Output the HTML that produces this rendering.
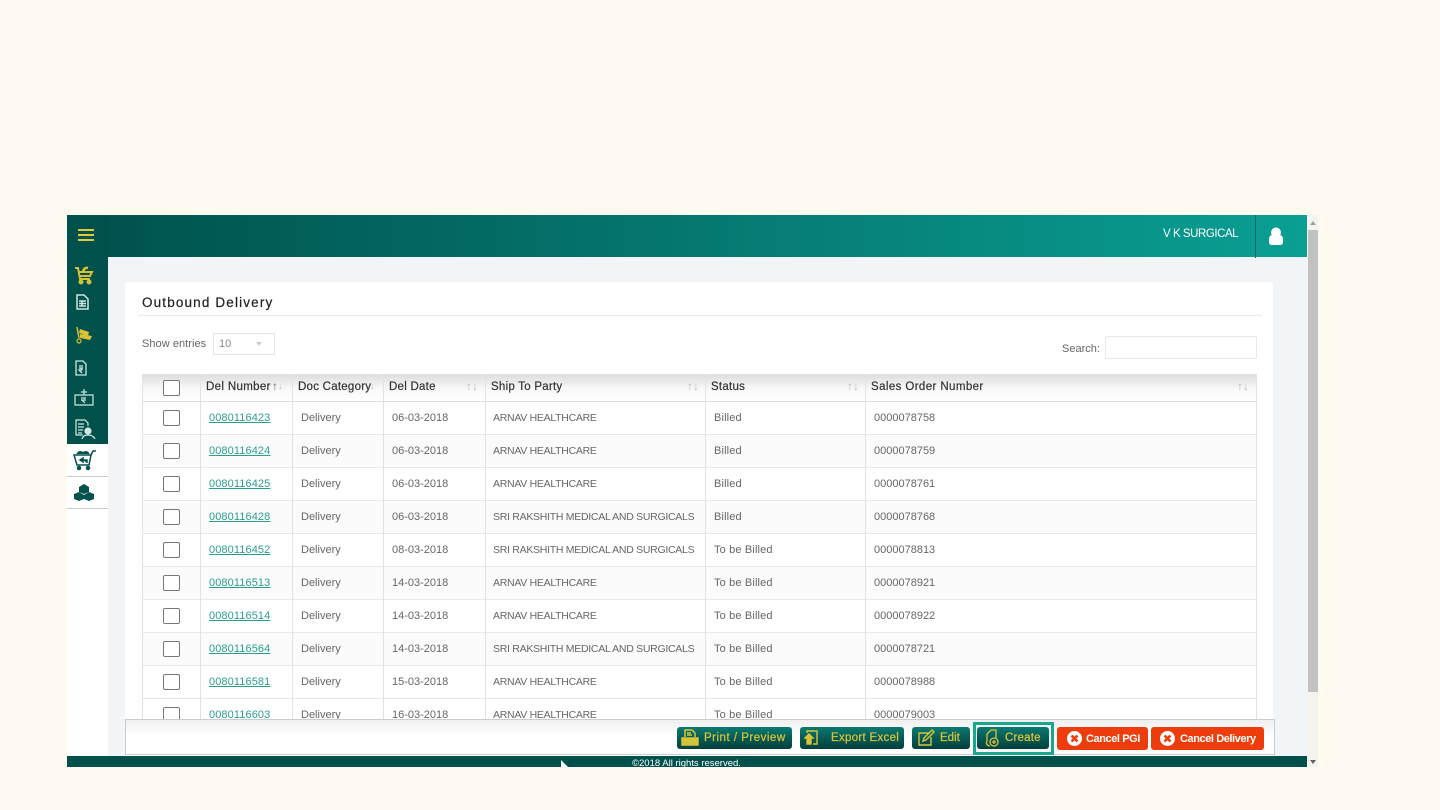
<!DOCTYPE html>
<html><head><meta charset="utf-8"><title>Outbound Delivery</title>
<style>
html,body{margin:0;padding:0;width:1440px;height:810px;overflow:hidden;background:#fffaf0;font-family:"Liberation Sans",sans-serif}
div,a,span,svg{position:absolute;display:block;box-sizing:border-box;white-space:nowrap}
.t{font-size:11px;color:#666;line-height:14px}
.u{font-size:10.5px;letter-spacing:-.28px}
.s{letter-spacing:.15px}
.h{font-size:11.5px;color:#333;line-height:14px;top:380px;-webkit-text-stroke:.2px #333;letter-spacing:.25px}
.v{position:absolute;width:1px;background:#dfe3e6;top:374px;height:345px}
.cb{width:17px;height:16px;left:163px;border:1px solid #777;border-radius:2px;background:#fff}
.l{left:209px;color:#2a9d92;text-decoration:underline;letter-spacing:.1px}
.btn{top:727px;height:22px;border-radius:3px;background:linear-gradient(#0b7a70,#075a54 50%,#04403c);color:#d6c33c;font-size:11.5px;line-height:22px;-webkit-text-stroke:.25px #d6c33c}
.red{top:727px;height:23px;border-radius:3px;background:#ee3d0c;color:#fff;font-size:11px;line-height:24px;font-weight:bold;letter-spacing:-.42px}
.arr{font-size:12px;color:#bbb;top:380px;line-height:13px}
</style></head><body>
<div style="left:67px;top:215px;width:1240px;height:552px;background:#f1f5f8"></div>
<div style="left:67px;top:215px;width:1240px;height:42px;background:linear-gradient(90deg,#00504c,#0a9f93)"></div>
<div style="left:67px;top:215px;width:41px;height:541px;background:#fff"></div>
<div style="left:67px;top:215px;width:41px;height:229px;background:#00504c"></div>
<div style="left:78px;top:229px;width:16px;height:2px;background:#e0c93f"></div>
<div style="left:78px;top:234px;width:16px;height:2px;background:#e0c93f"></div>
<div style="left:78px;top:239px;width:16px;height:2px;background:#e0c93f"></div>
<div style="left:1163px;top:227px;font-size:11.5px;line-height:14px;color:#fff;letter-spacing:-.45px">V K SURGICAL</div>
<div style="left:1255px;top:215px;width:1px;height:43px;background:#066"></div>
<svg style="left:1268px;top:227px" width="16" height="18" viewBox="0 0 16 18"><circle cx="8" cy="5.500" r="5" fill="#fff"/><path d="M1 15V12Q1 8 5 8H11Q15 8 15 12V15Q15 18 12 18H4Q1 18 1 15Z" fill="#fff"/></svg>

<!-- sidebar icons -->
<svg style="left:74px;top:266px" width="20" height="19" viewBox="0 0 20 19" fill="none" stroke="#d8c234" stroke-width="2"><path d="M1 2H4L6 13H16"/><path d="M5 6H18L16 10H6"/><path d="M9 6Q10 1 14 2" stroke-width="2.500"/><circle cx="7" cy="16" r="1.500" fill="#d8c234"/><circle cx="15" cy="16" r="1.500" fill="#d8c234"/></svg>
<svg style="left:76px;top:294px" width="13" height="16" viewBox="0 0 13 16" fill="none" stroke="#cfe6e2" stroke-width="1.500"><path d="M1 1H8L12 5V15H1Z"/><path d="M3 7H10M3 9.500H10M3 12H10M6 7V12"/></svg>
<svg style="left:75px;top:326px" width="18" height="18" viewBox="0 0 18 18" fill="#d8c234"><path d="M2 1L4 12" stroke="#d8c234" stroke-width="1.500"/><path d="M5 3L14 6 13 10 4 7ZM5 8L17 10 15 14 5 12Z"/><circle cx="4" cy="15" r="2" fill="none" stroke="#d8c234" stroke-width="1.200"/></svg>
<svg style="left:75px;top:360px" width="12" height="16" viewBox="0 0 12 16" fill="none" stroke="#cfe6e2" stroke-width="1.300"><path d="M1 1H8L11 4V15H1Z"/><path d="M4 6H8M4 8H8M4 8Q7 8 7 10L4 10L7 13"/></svg>
<svg style="left:73px;top:388px" width="22" height="18" viewBox="0 0 22 18" fill="none" stroke="#cfe6e2" stroke-width="1.200"><path d="M2 7H20V17H2Z"/><path d="M11 1V7M8 4H14" /><path d="M8 10H13M8 12H13M9 12L12 15"/></svg>
<svg style="left:74px;top:419px" width="22" height="21" viewBox="0 0 22 21" fill="none" stroke="#cfe6e2" stroke-width="1.200"><path d="M9 16H2V1H11L14 4V7"/><path d="M4 5H10M4 8H10M4 11H9M4 14H8"/><circle cx="14" cy="12" r="3" fill="#cfe6e2"/><path d="M8 20Q9 16 14 16T21 20"/></svg>
<div style="left:67px;top:476px;width:41px;height:1px;background:#ccc"></div>
<div style="left:67px;top:508px;width:41px;height:1px;background:#ccc"></div>
<svg style="left:73px;top:449px" width="24" height="22" viewBox="0 0 24 22" fill="none" stroke="#06524d" stroke-width="1.500"><path d="M1 6H18L16 16H4Z"/><path d="M18 6L20 2H23"/><path d="M4 5Q7 1 10 4Q13 1 16 5" fill="#06524d"/><path d="M7 11L10 9V13ZM10 11H14V14" fill="#06524d"/><circle cx="6" cy="19" r="1.500" fill="#06524d"/><circle cx="15" cy="19" r="1.500" fill="#06524d"/></svg>
<svg style="left:74px;top:484px" width="20" height="17" viewBox="0 0 20 17" fill="#06524d"><path d="M10 0L15 3V8L10 10 5 8V3Z"/><path d="M5 8L10 11V15L5 17 0 15V10Z"/><path d="M15 8L20 10V15L15 17 10 15V11Z"/></svg>

<!-- card -->
<div style="left:125px;top:282px;width:1148px;height:475px;background:#fff;border-radius:3px"></div>
<div style="left:142px;top:295px;font-size:13.500px;line-height:16px;color:#222;letter-spacing:1.15px;-webkit-text-stroke:.2px #222">Outbound Delivery</div>
<div style="left:138px;top:315px;width:1124px;height:1px;background:#e6e9ec"></div>
<div class="t" style="left:142px;top:337px;letter-spacing:.05px">Show entries</div>
<div style="left:213px;top:333px;width:62px;height:22px;border:1px solid #e6e8ea;border-radius:2px"></div>
<div class="t" style="left:219px;top:337px;color:#888">10</div>
<div style="left:256px;top:342px;width:0;height:0;border:3px solid transparent;border-top:4px solid #ccc"></div>
<div class="t" style="left:1062px;top:342px">Search:</div>
<div style="left:1105px;top:336px;width:152px;height:23px;border:1px solid #e6e8ea;border-radius:2px"></div>

<!-- table -->
<div style="left:142px;top:374px;width:1115px;height:28px;background:linear-gradient(#dedcdd,#f8f8f8 55%,#fff);border-bottom:1px solid #dcdfe2"></div>
<div style="left:142px;top:434px;width:1115px;height:33px;background:#fbfbfb"></div>
<div style="left:142px;top:500px;width:1115px;height:33px;background:#fbfbfb"></div>
<div style="left:142px;top:566px;width:1115px;height:33px;background:#fbfbfb"></div>
<div style="left:142px;top:632px;width:1115px;height:33px;background:#fbfbfb"></div>
<div style="left:142px;top:434px;width:1115px;height:1px;background:#e6e9ec"></div>
<div style="left:142px;top:467px;width:1115px;height:1px;background:#e6e9ec"></div>
<div style="left:142px;top:500px;width:1115px;height:1px;background:#e6e9ec"></div>
<div style="left:142px;top:533px;width:1115px;height:1px;background:#e6e9ec"></div>
<div style="left:142px;top:566px;width:1115px;height:1px;background:#e6e9ec"></div>
<div style="left:142px;top:599px;width:1115px;height:1px;background:#e6e9ec"></div>
<div style="left:142px;top:632px;width:1115px;height:1px;background:#e6e9ec"></div>
<div style="left:142px;top:665px;width:1115px;height:1px;background:#e6e9ec"></div>
<div style="left:142px;top:698px;width:1115px;height:1px;background:#e6e9ec"></div>
<span class="v" style="left:142px"></span><span class="v" style="left:200px"></span><span class="v" style="left:292px"></span><span class="v" style="left:383px"></span><span class="v" style="left:485px"></span><span class="v" style="left:705px"></span><span class="v" style="left:865px"></span><span class="v" style="left:1256px"></span>

<div class="cb" style="top:380px"></div>
<div class="h" style="left:206px;letter-spacing:.35px">Del Number</div><div class="arr" style="left:272px;color:#666">↑</div><div class="arr" style="left:278px;font-size:9px">↓</div>
<div class="h" style="left:298px">Doc Category</div><div class="arr" style="left:370px;font-size:9px">↓</div>
<div class="h" style="left:389px">Del Date</div><div class="arr" style="left:466px">↑↓</div>
<div class="h" style="left:491px">Ship To Party</div><div class="arr" style="left:687px">↑↓</div>
<div class="h" style="left:711px">Status</div><div class="arr" style="left:847px">↑↓</div>
<div class="h" style="left:871px;letter-spacing:.4px">Sales Order Number</div><div class="arr" style="left:1237px">↑↓</div>

<div class="cb" style="top:410px"></div><a class="t l" style="top:411px">0080116423</a><div class="t" style="left:301px;top:411px">Delivery</div><div class="t" style="left:392px;top:411px">06-03-2018</div><div class="t u" style="left:493px;top:411px">ARNAV HEALTHCARE</div><div class="t s" style="left:714px;top:411px">Billed</div><div class="t" style="left:874px;top:411px">0000078758</div>
<div class="cb" style="top:443px"></div><a class="t l" style="top:444px">0080116424</a><div class="t" style="left:301px;top:444px">Delivery</div><div class="t" style="left:392px;top:444px">06-03-2018</div><div class="t u" style="left:493px;top:444px">ARNAV HEALTHCARE</div><div class="t s" style="left:714px;top:444px">Billed</div><div class="t" style="left:874px;top:444px">0000078759</div>
<div class="cb" style="top:476px"></div><a class="t l" style="top:477px">0080116425</a><div class="t" style="left:301px;top:477px">Delivery</div><div class="t" style="left:392px;top:477px">06-03-2018</div><div class="t u" style="left:493px;top:477px">ARNAV HEALTHCARE</div><div class="t s" style="left:714px;top:477px">Billed</div><div class="t" style="left:874px;top:477px">0000078761</div>
<div class="cb" style="top:509px"></div><a class="t l" style="top:510px">0080116428</a><div class="t" style="left:301px;top:510px">Delivery</div><div class="t" style="left:392px;top:510px">06-03-2018</div><div class="t u" style="left:493px;top:510px">SRI RAKSHITH MEDICAL AND SURGICALS</div><div class="t s" style="left:714px;top:510px">Billed</div><div class="t" style="left:874px;top:510px">0000078768</div>
<div class="cb" style="top:542px"></div><a class="t l" style="top:543px">0080116452</a><div class="t" style="left:301px;top:543px">Delivery</div><div class="t" style="left:392px;top:543px">08-03-2018</div><div class="t u" style="left:493px;top:543px">SRI RAKSHITH MEDICAL AND SURGICALS</div><div class="t s" style="left:714px;top:543px">To be Billed</div><div class="t" style="left:874px;top:543px">0000078813</div>
<div class="cb" style="top:575px"></div><a class="t l" style="top:576px">0080116513</a><div class="t" style="left:301px;top:576px">Delivery</div><div class="t" style="left:392px;top:576px">14-03-2018</div><div class="t u" style="left:493px;top:576px">ARNAV HEALTHCARE</div><div class="t s" style="left:714px;top:576px">To be Billed</div><div class="t" style="left:874px;top:576px">0000078921</div>
<div class="cb" style="top:608px"></div><a class="t l" style="top:609px">0080116514</a><div class="t" style="left:301px;top:609px">Delivery</div><div class="t" style="left:392px;top:609px">14-03-2018</div><div class="t u" style="left:493px;top:609px">ARNAV HEALTHCARE</div><div class="t s" style="left:714px;top:609px">To be Billed</div><div class="t" style="left:874px;top:609px">0000078922</div>
<div class="cb" style="top:641px"></div><a class="t l" style="top:642px">0080116564</a><div class="t" style="left:301px;top:642px">Delivery</div><div class="t" style="left:392px;top:642px">14-03-2018</div><div class="t u" style="left:493px;top:642px">SRI RAKSHITH MEDICAL AND SURGICALS</div><div class="t s" style="left:714px;top:642px">To be Billed</div><div class="t" style="left:874px;top:642px">0000078721</div>
<div class="cb" style="top:674px"></div><a class="t l" style="top:675px">0080116581</a><div class="t" style="left:301px;top:675px">Delivery</div><div class="t" style="left:392px;top:675px">15-03-2018</div><div class="t u" style="left:493px;top:675px">ARNAV HEALTHCARE</div><div class="t s" style="left:714px;top:675px">To be Billed</div><div class="t" style="left:874px;top:675px">0000078988</div>
<div class="cb" style="top:707px"></div><a class="t l" style="top:708px">0080116603</a><div class="t" style="left:301px;top:708px">Delivery</div><div class="t" style="left:392px;top:708px">16-03-2018</div><div class="t u" style="left:493px;top:708px">ARNAV HEALTHCARE</div><div class="t s" style="left:714px;top:708px">To be Billed</div><div class="t" style="left:874px;top:708px">0000079003</div>

<!-- bottom bar -->
<div style="left:125px;top:719px;width:1150px;height:36px;background:linear-gradient(#f0f0f0,#fff 50%);border:1px solid #c8cdd0"></div>
<div class="btn" style="left:677px;width:115px"><span style="left:27px;top:0;letter-spacing:.5px">Print / Preview</span></div>
<svg style="left:681px;top:729px" width="18" height="18" viewBox="0 0 18 18" fill="none" stroke="#d6c33c" stroke-width="1.500"><path d="M4 8V1H11L14 4V8"/><path d="M1 9H17V16H1Z" fill="#d6c33c"/><path d="M6 4H10M6 6H11"/></svg>
<div class="btn" style="left:800px;width:104px"><span style="left:31px;top:0;letter-spacing:.3px">Export Excel</span></div>
<svg style="left:804px;top:730px" width="16" height="16" viewBox="0 0 16 16" fill="none" stroke="#d6c33c" stroke-width="1.400"><path d="M3 3V1H13V14H9"/><path d="M1 8L5 4 9 8H7V14H3V8Z" fill="#d6c33c"/></svg>
<div class="btn" style="left:912px;width:58px"><span style="left:28px;top:0">Edit</span></div>
<svg style="left:918px;top:729px" width="18" height="17" viewBox="0 0 18 17" fill="none" stroke="#d6c33c" stroke-width="1.400"><path d="M12 4H1V16H13V8"/><path d="M5 12L6 9 14 1 16 3 8 11Z"/></svg>
<div style="left:973px;top:722px;width:81px;height:33px;border:3px solid #18a78f;background:#f5f5f5"></div>
<div class="btn" style="left:977px;width:72px"><span style="left:28px;top:0;letter-spacing:.2px">Create</span></div>
<svg style="left:984px;top:729px" width="16" height="18" viewBox="0 0 16 18" fill="none" stroke="#d6c33c" stroke-width="1.300"><path d="M3 12V5L7 1H12V9"/><path d="M3 12Q1 16 6 17"/><circle cx="10" cy="13" r="4"/><path d="M8 13H12M10 11V15"/></svg>
<div class="red" style="left:1057px;width:91px"><span style="left:29px;top:0">Cancel PGI</span></div>
<svg style="left:1067px;top:731px" width="15" height="15" viewBox="0 0 15 15"><circle cx="7.500" cy="7.500" r="7.500" fill="#fff"/><path d="M4.500 4.500L10.500 10.500M10.500 4.500L4.500 10.500" stroke="#ee3d0c" stroke-width="2.600"/></svg>
<div class="red" style="left:1151px;width:113px"><span style="left:29px;top:0">Cancel Delivery</span></div>
<svg style="left:1160px;top:731px" width="15" height="15" viewBox="0 0 15 15"><circle cx="7.500" cy="7.500" r="7.500" fill="#fff"/><path d="M4.500 4.500L10.500 10.500M10.500 4.500L4.500 10.500" stroke="#ee3d0c" stroke-width="2.600"/></svg>

<!-- footer -->
<div style="left:67px;top:756px;width:1240px;height:11px;background:#00504c;overflow:hidden"><span style="left:565px;top:1px;font-size:9.500px;line-height:13px;color:#fff">©2018 All rights reserved.</span></div>
<svg style="left:561px;top:760px" width="8" height="7" viewBox="0 0 8 7"><path d="M0 0L7 7H0Z" fill="#fff"/></svg>

<!-- scrollbar -->
<div style="left:1307px;top:215px;width:11px;height:552px;background:#f5f3ee"></div>
<div style="left:1308px;top:230px;width:10px;height:462px;background:#c1c1c1"></div>
<div style="left:1310px;top:221px;width:0;height:0;border:3px solid transparent;border-bottom:4px solid #a0a0a0;border-top:0"></div>
<div style="left:1310px;top:760px;width:0;height:0;border:3px solid transparent;border-top:4px solid #606060;border-bottom:0"></div>
</body></html>
